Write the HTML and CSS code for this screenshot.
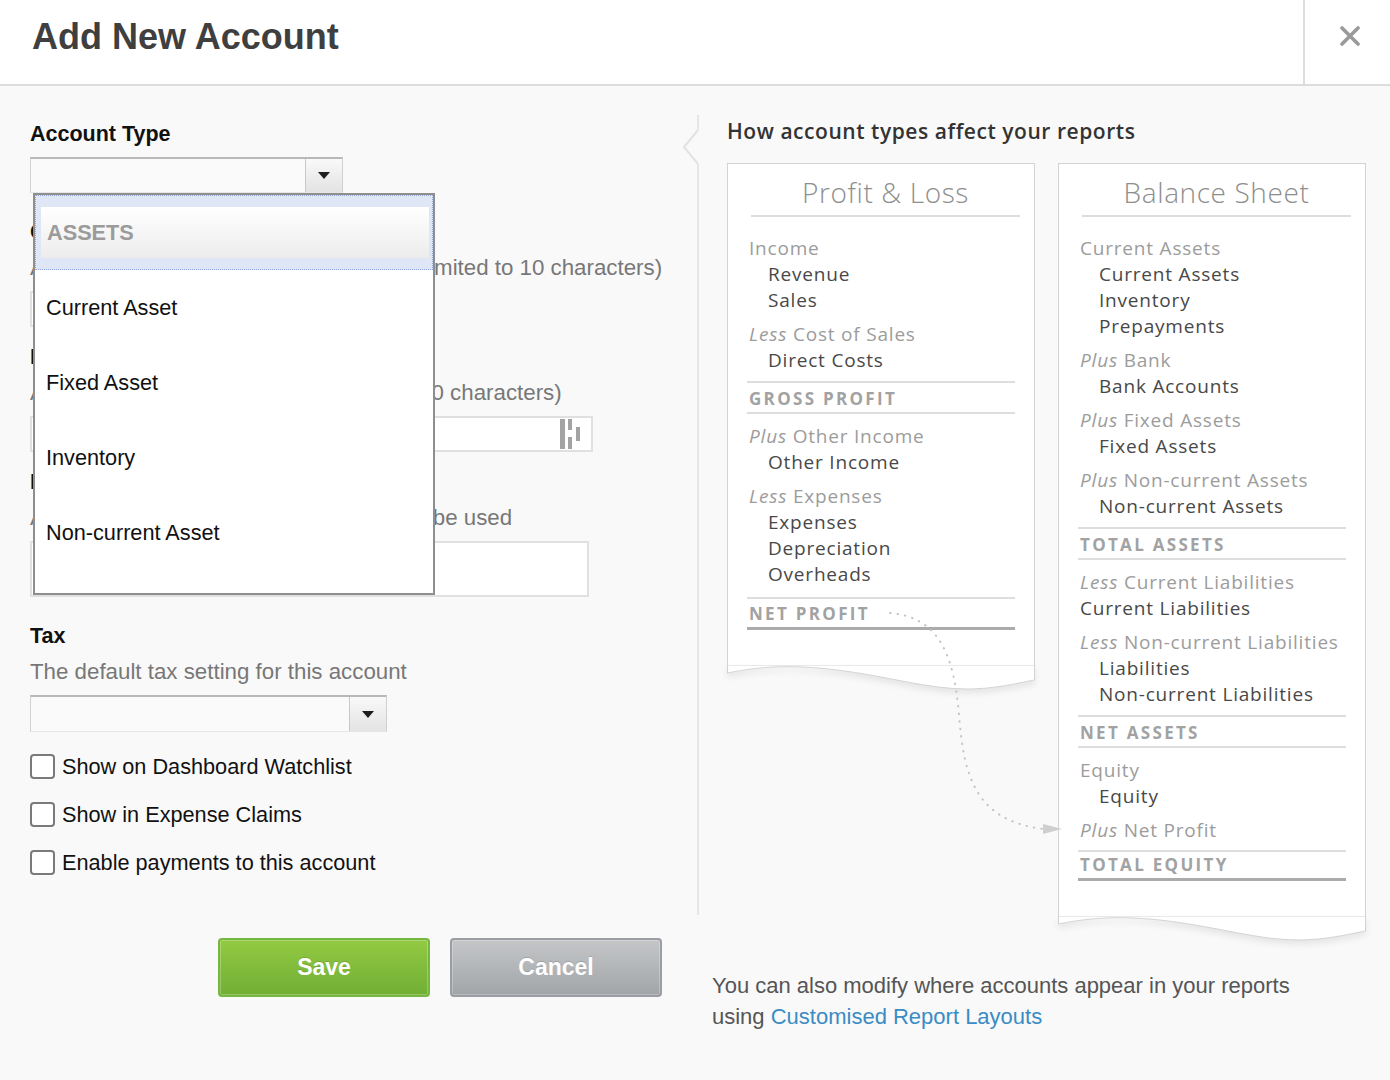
FILE: index.html
```html
<!DOCTYPE html>
<html lang="en">
  <head>
    <meta charset="UTF-8" />
    <meta name="viewport" content="width=device-width, initial-scale=1.0" />
    <title>Add New Account</title>
    <link rel="stylesheet" href="styles.css">
  </head>
  <body>
    <div id="header">
      <h1>Add New Account</h1>
      <a href="javascript:;" id="close">
        <svg width="20" height="20" viewBox="0 0 20 20"><path d="M2 2L18 18M18 2L2 18" stroke="#9a9a9a" stroke-width="3.6" stroke-linecap="round"/></svg>
      </a>
    </div>
    <div id="main">
      <div id="form">
        <div class="label">Account Type</div>
        <div class="type-wrap">
          <div class="select type-select"><span class="select-btn"><i class="caret"></i></span></div>
          <ul id="type-list">
            <li class="group on"><span>ASSETS</span></li>
            <li>Current Asset</li>
            <li>Fixed Asset</li>
            <li>Inventory</li>
            <li>Non-current Asset</li>
          </ul>
        </div>

        <div class="label field">Code</div>
        <div class="hint">A unique code/number for this account (limited to 10 characters)</div>
        <div class="input code-input"></div>

        <div class="label field-sm">Name</div>
        <div class="hint">A short title for this account (limited to 150 characters)</div>
        <div class="input name-input">
          <svg class="input-icon" width="22" height="30" viewBox="0 0 22 30"><rect x="0" y="0" width="5" height="30" fill="#a3a3a3"/><rect x="8" y="0" width="4" height="11" fill="#a3a3a3"/><rect x="8" y="18" width="4" height="12" fill="#a3a3a3"/><rect x="16" y="8" width="4" height="14" fill="#a3a3a3"/></svg>
        </div>

        <div class="label field-sm">Description (optional)</div>
        <div class="hint">A description of how this account should be used</div>
        <div class="input desc-input"></div>

        <div class="label field">Tax</div>
        <div class="hint">The default tax setting for this account</div>
        <div class="select tax-select"><span class="select-btn"><i class="caret"></i></span></div>

        <div class="checks">
          <label class="check"><input type="checkbox" />Show on Dashboard Watchlist</label>
          <label class="check"><input type="checkbox" />Show in Expense Claims</label>
          <label class="check"><input type="checkbox" />Enable payments to this account</label>
        </div>

        <div class="actions">
          <a href="javascript:;" class="btn save">Save</a>
          <a href="javascript:;" class="btn cancel">Cancel</a>
        </div>
      </div>

      <div id="reports">
        <div id="aside">
          <svg class="notch" width="18" height="34" viewBox="0 0 18 34"><polygon points="16,0 18,0 18,34 16,34 2,17" fill="#f9f9f9"/><polyline points="16,0 2,17 16,34" fill="none" stroke="#e2e2e2" stroke-width="2"/></svg>
          <h2>How account types affect your reports</h2>
          <div class="sheets">
            <div class="sheet">
              <div class="sheet-body">
                <h3>Profit &amp; Loss</h3>
                <div class="grp first">
                  <div class="cat">Income</div>
                  <div class="item">Revenue</div>
                  <div class="item">Sales</div>
                </div>
                <div class="grp">
                  <div class="cat"><em>Less</em> Cost of Sales</div>
                  <div class="item">Direct Costs</div>
                </div>
                <div class="total">GROSS PROFIT</div>
                <div class="grp">
                  <div class="cat"><em>Plus</em> Other Income</div>
                  <div class="item">Other Income</div>
                </div>
                <div class="grp">
                  <div class="cat"><em>Less</em> Expenses</div>
                  <div class="item">Expenses</div>
                  <div class="item">Depreciation</div>
                  <div class="item">Overheads</div>
                </div>
                <div class="total final">NET PROFIT</div>
              </div>
              <svg class="tear" viewBox="0 0 308 30" preserveAspectRatio="none"><path d="M0.5 0V8C30 2 62 -1 110 5C160 11 200 24 240 24C270 24 295 17 307.5 15V0Z" fill="#fff" stroke="#d3d3d3" stroke-width="1"/></svg>
            </div>
            <div class="sheet">
              <div class="sheet-body">
                <h3>Balance Sheet</h3>
                <div class="grp first">
                  <div class="cat">Current Assets</div>
                  <div class="item">Current Assets</div>
                  <div class="item">Inventory</div>
                  <div class="item">Prepayments</div>
                </div>
                <div class="grp">
                  <div class="cat"><em>Plus</em> Bank</div>
                  <div class="item">Bank Accounts</div>
                </div>
                <div class="grp">
                  <div class="cat"><em>Plus</em> Fixed Assets</div>
                  <div class="item">Fixed Assets</div>
                </div>
                <div class="grp">
                  <div class="cat"><em>Plus</em> Non-current Assets</div>
                  <div class="item">Non-current Assets</div>
                </div>
                <div class="total">TOTAL ASSETS</div>
                <div class="grp">
                  <div class="cat"><em>Less</em> Current Liabilities</div>
                  <div class="item flat">Current Liabilities</div>
                </div>
                <div class="grp">
                  <div class="cat"><em>Less</em> Non-current Liabilities</div>
                  <div class="item">Liabilities</div>
                  <div class="item">Non-current Liabilities</div>
                </div>
                <div class="total">NET ASSETS</div>
                <div class="grp">
                  <div class="cat">Equity</div>
                  <div class="item">Equity</div>
                </div>
                <div class="grp">
                  <div class="cat"><em>Plus</em> Net Profit</div>
                </div>
                <div class="total final tight">TOTAL EQUITY</div>
              </div>
              <svg class="tear" viewBox="0 0 308 30" preserveAspectRatio="none"><path d="M0.5 0V8C30 2 62 -1 110 5C160 11 200 24 240 24C270 24 295 17 307.5 15V0Z" fill="#fff" stroke="#d3d3d3" stroke-width="1"/></svg>
            </div>
          </div>
          <!-- dotted link from net profit to balance sheet -->
          <svg class="flow" width="380" height="730" viewBox="0 0 380 730">
            <path d="M191 498C240 502 255 540 260 600S275 705 344 714" fill="none" stroke="#c4c4c4" stroke-width="2" stroke-dasharray="0.5 7" stroke-linecap="round"/>
            <polygon points="344,709 363,714 344,719" fill="#cfcfcf"/>
          </svg>
        </div>
        <p class="note">You can also modify where accounts appear in your reports<br />using <a href="javascript:;">Customised Report Layouts</a></p>
      </div>
    </div>
  </body>
</html>
```

FILE: styles.css
```css
body {
  margin: 0;
  background: #f9f9f9;
  font-family: "Liberation Sans", Arial, sans-serif;
  color: #222;
}
#header {
  display: flex;
  height: 84px;
  background: #fff;
  border-bottom: 2px solid #ddd;
}
#header h1 {
  flex: 1;
  margin: 0;
  padding-left: 32px;
  font-size: 36px;
  line-height: 74px;
  color: #3f3f3f;
}
#close {
  display: flex;
  justify-content: center;
  align-items: flex-start;
  width: 80px;
  padding: 26px 0 0 5px;
  border-left: 2px solid #ddd;
}
#main {
  display: flex;
}
#form {
  width: 632px;
  padding: 35px 35px 0 30px;
}
.label {
  font-size: 21.5px;
  line-height: 26px;
  font-weight: bold;
  color: #111;
}
.hint {
  margin-top: 10px;
  font-size: 22.3px;
  line-height: 26px;
  color: #777;
  white-space: nowrap;
}
.field {
  margin-top: 26px;
}
.field-sm {
  margin-top: 17px;
}
.select {
  display: flex;
  box-sizing: border-box;
  height: 36px;
  margin-top: 10px;
  background: #fafafa;
  border: 1px solid #d0d0d0;
  border-top: 2px solid #b8b8b8;
  border-bottom-color: #e6e6e6;
}
.type-select {
  width: 313px;
}
.tax-select {
  width: 357px;
  height: 37px;
}
.select-btn {
  display: flex;
  align-items: center;
  justify-content: center;
  width: 36px;
  margin-left: auto;
  border-left: 1px solid #c8c8c8;
  background: linear-gradient(#f9f9f9, #e3e3e3);
}
.caret {
  width: 0;
  height: 0;
  border-left: 6px solid transparent;
  border-right: 6px solid transparent;
  border-top: 7px solid #1e1e1e;
}
.type-wrap {
  position: relative;
}
#type-list {
  position: absolute;
  left: 3px;
  top: 36px;
  z-index: 2;
  box-sizing: border-box;
  width: 402px;
  height: 402px;
  margin: 0;
  padding: 0;
  list-style: none;
  background: #fff;
  border: 2px solid #8e8e8e;
}
#type-list li {
  height: 75px;
  padding-left: 11px;
  font-size: 21.7px;
  line-height: 75px;
  color: #111;
}
#type-list .group {
  box-sizing: border-box;
  padding: 11px 3px 10px 5px;
  line-height: normal;
  background: #dfe6f5;
  border: 1px dotted #93a9dc;
}
#type-list .group span {
  display: block;
  height: 51px;
  padding-left: 6px;
  line-height: 51px;
  font-weight: bold;
  color: #9b9b9b;
  background: linear-gradient(#fff, #ececec);
}
.input {
  position: relative;
  box-sizing: border-box;
  height: 36px;
  margin-top: 10px;
  background: #fff;
  border: 2px solid #e0e0e0;
}
.code-input {
  width: 180px;
}
.name-input {
  width: 563px;
}
.input-icon {
  position: absolute;
  right: 9px;
  top: 1px;
}
.desc-input {
  width: 559px;
  height: 56px;
}
.checks {
  display: flex;
  flex-direction: column;
  gap: 23px;
  margin-top: 22px;
}
.check {
  display: flex;
  align-items: center;
  height: 25px;
  font-size: 21.7px;
  color: #111;
}
.check input {
  appearance: none;
  box-sizing: border-box;
  width: 25px;
  height: 25px;
  margin: 0 7px 0 0;
  background: #fff;
  border: 2px solid #7a7a7a;
  border-radius: 4px;
}
.actions {
  display: flex;
  justify-content: flex-end;
  gap: 20px;
  margin-top: 63px;
}
.btn {
  box-sizing: border-box;
  width: 212px;
  height: 59px;
  font-size: 23px;
  font-weight: bold;
  line-height: 55px;
  text-align: center;
  color: #fff;
  text-decoration: none;
  text-shadow: 0 -1px 0 rgba(0, 0, 0, 0.15);
  border-radius: 4px;
}
.save {
  background: linear-gradient(#93ca42, #70ae35);
  border: 2px solid #76b83f;
  box-shadow: inset 0 0 0 1px rgba(255, 255, 255, 0.25);
}
.cancel {
  background: linear-gradient(#c4c6c8, #a2a5a8);
  border: 2px solid #9a9ea2;
  box-shadow: inset 0 0 0 1px rgba(255, 255, 255, 0.25);
}
#reports {
  flex: 1;
}
#aside {
  position: relative;
  box-sizing: border-box;
  height: 800px;
  margin-top: 29px;
  padding: 3px 0 0 28px;
  border-left: 2px solid #e6e6e6;
}
.notch {
  position: absolute;
  left: -17px;
  top: 15px;
}
#aside h2 {
  margin: 0;
  font-family: "Open Sans", "Liberation Sans", sans-serif;
  font-size: 21px;
  font-weight: 600;
  line-height: 26px;
  letter-spacing: 0.55px;
  color: #333;
}
.sheets {
  display: flex;
  align-items: flex-start;
  gap: 23px;
  margin-top: 19px;
}
.sheet {
  width: 308px;
}
.sheet-body {
  padding: 0 19px 27px;
  background: #fff;
  border: 1px solid #d3d3d3;
  border-bottom: none;
  font-family: "Open Sans", "Liberation Sans", sans-serif;
}
.tear {
  display: block;
  width: 100%;
  height: 30px;
  margin-top: -1px;
  filter: drop-shadow(0 4px 3px rgba(0, 0, 0, 0.08));
}
.sheet-body h3 {
  margin: 0 -5px 0 4px;
  padding: 8px 0 3px;
  font-size: 28px;
  font-weight: 300;
  line-height: 40px;
  letter-spacing: 0.6px;
  text-align: center;
  color: #8e8e8e;
  border-bottom: 2px solid #ddd;
}
.grp {
  margin-top: 8px;
}
.grp.first {
  margin-top: 18px;
}
.cat,
.item {
  padding-left: 2px;
  font-size: 19px;
  line-height: 26px;
  letter-spacing: 0.8px;
  white-space: nowrap;
  color: #9c9c9c;
}
.item {
  padding-left: 21px;
  color: #484848;
}
.item.flat {
  padding-left: 2px;
}
.total {
  margin: 8px 0 9px;
  padding: 3px 0 0 2px;
  font-size: 17px;
  font-weight: 700;
  line-height: 26px;
  letter-spacing: 2.3px;
  color: #a2a2a2;
  border-top: 2px solid #ddd;
  border-bottom: 2px solid #ddd;
}
.total.final {
  margin-top: 10px;
  padding-top: 2px;
  border-bottom: 3px solid #ababab;
}
.total.tight {
  margin-top: 7px;
  padding-top: 0;
}
.flow {
  position: absolute;
  left: 0;
  top: 0;
  z-index: 3;
  pointer-events: none;
}
.note {
  margin: 55px 0 0;
  padding-left: 15px;
  font-size: 22px;
  line-height: 31px;
  color: #555;
}
.note a {
  color: #3a8cc4;
  text-decoration: none;
}
```
